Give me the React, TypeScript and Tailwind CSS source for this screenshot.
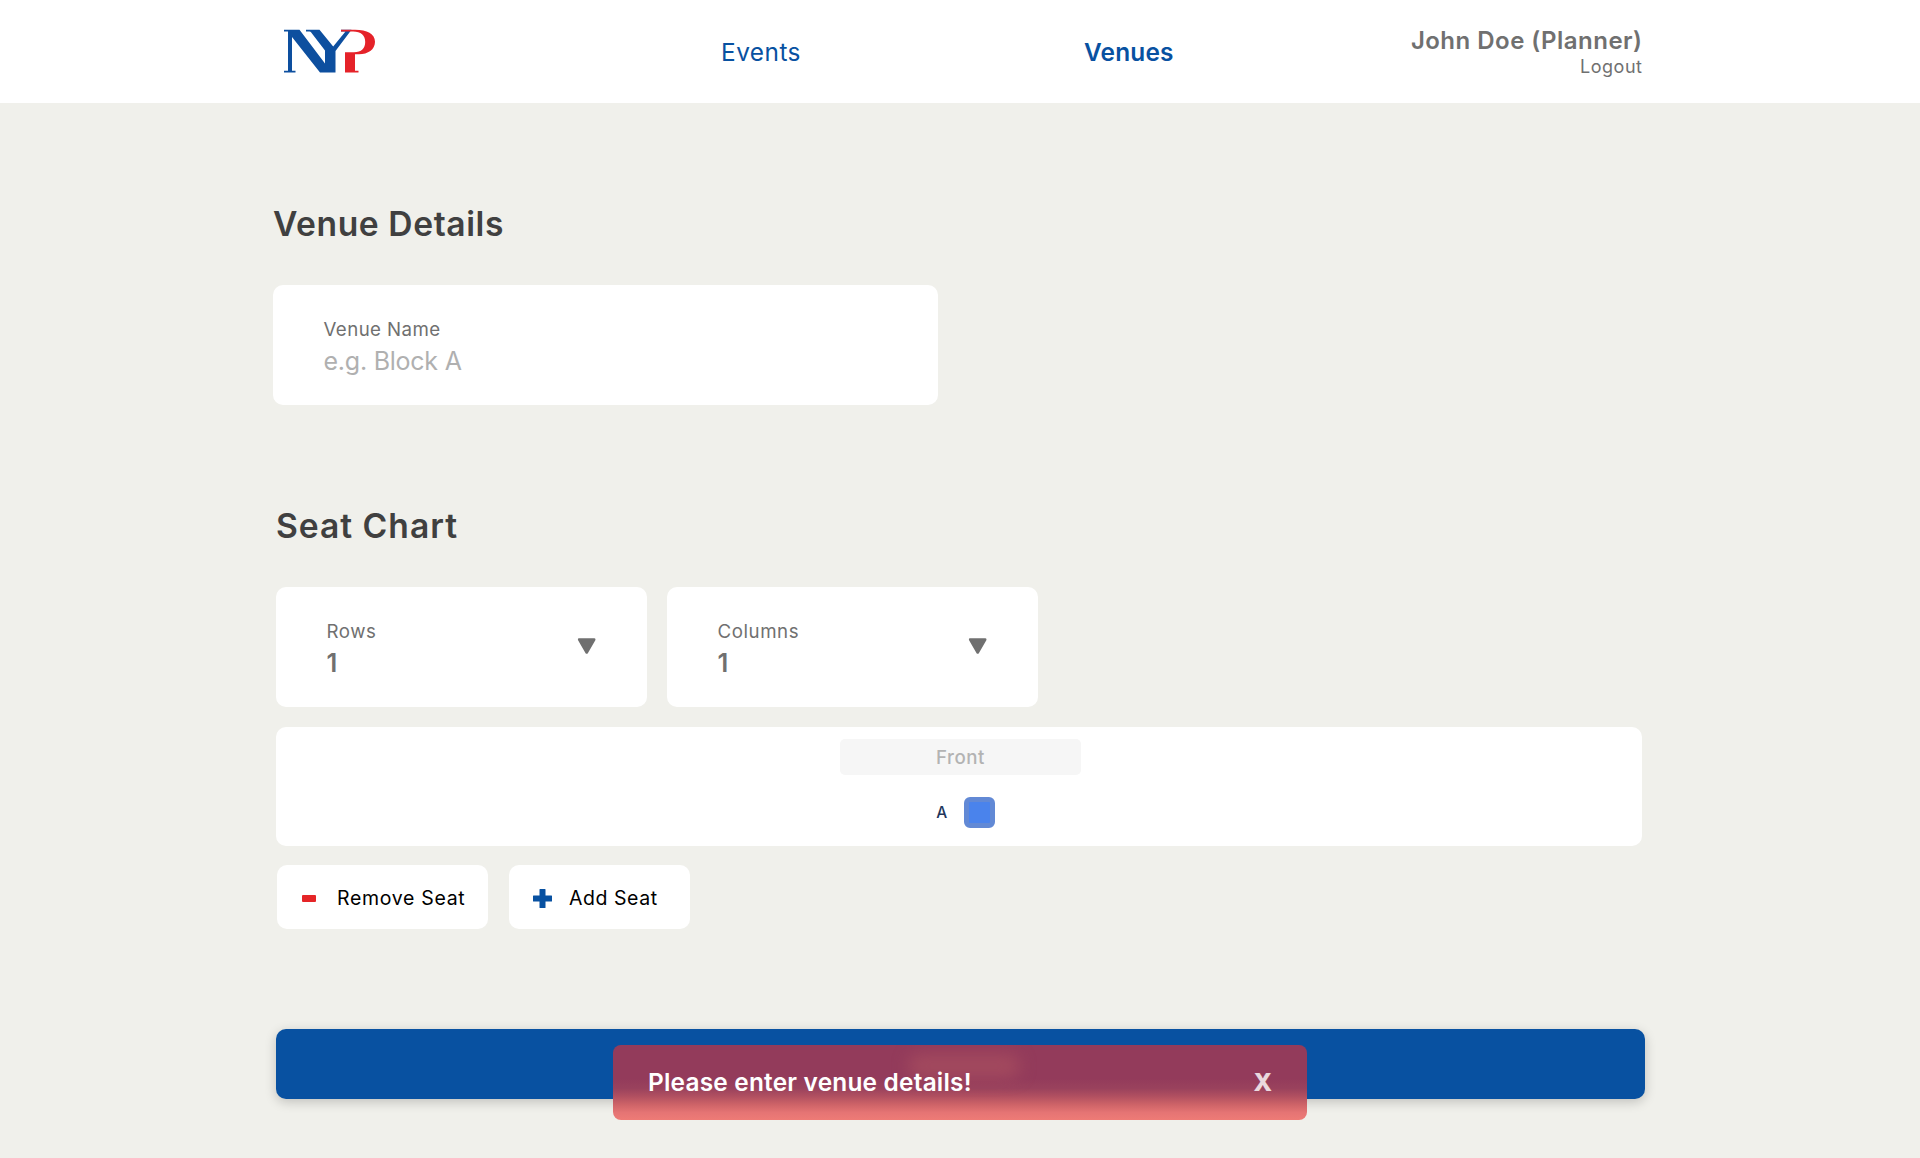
function Triangle() {
  return (
    <svg className="ml-auto mt-[51px] h-[17px] w-[20px] shrink-0" viewBox="0 0 20 17">
      <path d="M2.200 1.500h15L9.700 14.500Z" fill="#707070" stroke="#707070" strokeWidth="2.600" strokeLinejoin="round" />
    </svg>
  );
}

function Logo() {
  return (
    <svg className="mt-[29px] h-[44px] w-[92px] shrink-0" viewBox="0 0 92 44">
      <path
        d="M0 .8H15.500L41 34.500V21.500L27 3.200Q26.500 2.600 25.500 2.600H22V.8H35.500L49.200 17.500 61.500 2.600H57V.8H67.500L51.500 22V43.500H36L8 8V41.700H11.500V43.500H0V41.700H4V2.600H0Z"
        fill="#0d4f9f"
      />
      <path
        d="M57 .8H71C83 .8 91 5 91 12.800S84 25.300 75 25.300H71V41.700H74.500V43.500H61V23.300H70C77.500 23.300 81.200 19.500 81.200 13S77 2.600 69 2.600H57Z"
        fill="#e52229"
      />
    </svg>
  );
}

function Select({ label, value }: { label: string; value: string }) {
  return (
    <button className="flex h-[120px] w-[371px] rounded-[10px] bg-white pl-[50.500px] pr-[50px] text-left text-[#707070]">
      <span className="block pt-[33px]">
        <span className="block text-[18.700px] leading-6 tracking-[0.560px]">{label}</span>
        <span className="mt-[3px] block text-[25.500px] font-semibold leading-8">{value}</span>
      </span>
      <Triangle />
    </button>
  );
}

export default function App() {
  return (
    <div className="relative h-[1158px] w-full overflow-hidden bg-[#f0f0eb] font-[Inter,sans-serif]">
      <header className="flex h-[103px] bg-white pl-[284px] text-[#0851a1]">
        <Logo />
        <a className="ml-[345px] mt-[36px] w-[363px] whitespace-nowrap text-[24.400px] leading-8 tracking-[0.470px]">Events</a>
        <a className="mt-[36px] w-[200px] whitespace-nowrap text-[24.400px] font-semibold leading-8 tracking-[0.190px]">Venues</a>
        <div className="ml-auto mr-[277.500px] flex flex-col items-end pt-[25px] text-[#707070]">
          <span className="whitespace-nowrap text-[24px] font-semibold leading-8 tracking-[0.480px]">John Doe (Planner)</span>
          <a className="-mt-[2.500px] text-[18px] leading-6 tracking-[0.530px]">Logout</a>
        </div>
      </header>

      <main className="pt-[99px]">
        <section className="ml-[273px]">
          <h1 className="text-[33.600px] font-semibold leading-[44px] tracking-[0.600px] text-[#404040]">Venue Details</h1>
          <div className="mt-[39px] h-[120px] w-[665px] rounded-[10px] bg-white pl-[50.500px] pt-[33px]">
            <div className="text-[18.700px] leading-6 tracking-[0.420px] text-[#707070]">Venue Name</div>
            <div className="mt-[3px] text-[25px] leading-8 tracking-[-0.240px] text-[#b0b0b0]">e.g. Block A</div>
          </div>
        </section>

        <section className="ml-[276px] mt-[99px]">
          <h1 className="text-[33.600px] font-semibold leading-[44px] tracking-[1px] text-[#404040]">Seat Chart</h1>
          <div className="mt-[39px] flex gap-5">
            <Select label="Rows" value="1" />
            <Select label="Columns" value="1" />
          </div>
          <div className="mt-5 flex h-[119px] w-[1366px] flex-col items-center rounded-[10px] bg-white pt-3">
            <div className="ml-[3px] h-9 w-[241px] rounded-[5px] bg-[#f6f6f6] text-center text-[18.700px] font-medium leading-[37px] tracking-[0.500px] text-[#b3b3b3]">
              Front
            </div>
            <div className="mt-[22px] flex items-center pl-[13px]">
              <span className="w-[27.500px] text-[15.500px] font-medium leading-none text-[#22365c]">A</span>
              <span className="h-[31px] w-[31px] rounded-[6px] border-[5px] border-[#6289d5] bg-[#4a83ec]" />
            </div>
          </div>
          <div className="mt-[19px] flex gap-[21px] pl-[1px] text-[19.500px] text-black">
            <button className="flex h-16 w-[211px] items-center whitespace-nowrap rounded-[10px] bg-white pl-[25px] pt-[3px] tracking-[0.680px]">
              <span className="mr-[21.500px] h-[7px] w-[13.500px] shrink-0 rounded-[1px] bg-[#e52527]" />
              Remove Seat
            </button>
            <button className="flex h-16 w-[181px] items-center whitespace-nowrap rounded-[10px] bg-white pl-6 pt-[3px] tracking-[0.550px]">
              <svg className="mr-[17px] h-[19px] w-[19px]" viewBox="0 0 19 19">
                <path d="M7 0h5q.5 0 .5.500V6.500h6q.5 0 .5.500v5q0 .5-.5.500h-6v6q0 .5-.5.500H7q-.5 0-.5-.500v-6h-6Q0 12.500 0 12V7q0-.5.5-.500h6v-6Q6.500 0 7 0Z" fill="#0851a1" />
              </svg>
              Add Seat
            </button>
          </div>
          <button aria-label="Add Venue" className="mt-[100px] block h-[70px] w-[1369px] rounded-[10px] bg-[#0851a1] shadow-[0_3px_12px_rgba(0,0,0,0.200)]" />
        </section>
      </main>

      <div className="absolute left-[613px] top-[1045px] flex h-[75px] w-[694px] items-center overflow-hidden rounded-[8px] bg-[linear-gradient(to_bottom,#933b5b_0%,#933b5b_45%,#9a425d_58%,#b04f60_68%,#cf6468_80%,#e57474_90%,#ee7b76_100%)] px-[35px] pb-[2px] text-white">
        <span className="absolute left-[295px] top-[9px] h-[24px] w-[112px] rounded-full bg-[#a9505f]/70 blur-[8px]" />
        <span className="relative whitespace-nowrap text-[24.400px] font-semibold leading-8 tracking-[0.220px]">Please enter venue details!</span>
        <button className="relative ml-auto text-[24.400px] font-extrabold leading-8 text-white/80">X</button>
      </div>
    </div>
  );
}
